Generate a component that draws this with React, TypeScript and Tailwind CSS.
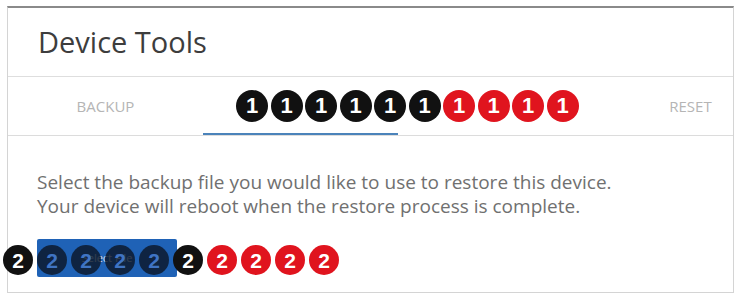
const font = { fontFamily: '"Open Sans", "Liberation Sans", sans-serif' };

function Marker({ n, red, size }: { n: number; red?: boolean; size: "lg" | "md" }) {
  const dims = size === "lg" ? "h-8 w-8 text-[22px]" : "h-[30px] w-[30px] text-[21px]";
  return (
    <div
      className={`${dims} flex items-center justify-center rounded-full font-extrabold leading-none text-white ${
        red ? "bg-[#e0141e]" : "bg-[#111111]"
      }`}
      style={{ fontFamily: '"Liberation Sans", Arial, sans-serif' }}
    >
      {n}
    </div>
  );
}

function ShadedMarker() {
  return (
    <div
      className="flex h-[30px] w-[30px] items-center justify-center rounded-full bg-[#0b1526]/80 text-[21px] font-extrabold leading-none text-[#3f74c4]"
      style={{ fontFamily: '"Liberation Sans", Arial, sans-serif' }}
    >
      2
    </div>
  );
}

// middle tab labels sit under the markers and can't be read
const tabs = ["Backup", "", "", "Reset"];

export default function App() {
  return (
    <div className="relative h-[298px] w-[734px] overflow-hidden bg-white" style={font}>
      <div className="pl-[7px] pt-[6px]">
        <div className="h-[287px] w-[727px] overflow-hidden border border-t-2 border-[#d4d4d4] border-t-[#8a8a8a] bg-white">
          <div className="flex h-[69px] items-center border-b border-[#dedede] px-[30px]">
            <h1 className="text-[29px] text-[#3d3d3d]">Device Tools</h1>
          </div>
          <div className="flex h-[59px] border-b border-[#dcdcdc]">
            {tabs.map((t, i) => (
              <div
                key={i}
                className={`flex w-[195px] shrink-0 items-center justify-center text-[15px] uppercase text-[#b5b5b5] ${
                  i === 1 ? "border-b-2 border-[#4b83ba]" : ""
                }`}
              >
                {t}
              </div>
            ))}
          </div>
          <div className="px-[29px] pt-[34px]">
            <p className="text-[19px] leading-[24px] text-[#707070]">
              Select the backup file you would like to use to restore this device.
              <br />
              Your device will reboot when the restore process is complete.
            </p>
            <button className="mt-[21px] flex h-[38px] w-[140px] items-center justify-center rounded-[2px] bg-[#1f62b6] text-[11px] text-white/80">
              Select File
            </button>
          </div>
        </div>
      </div>

      <div className="absolute left-[236px] top-[90px] flex gap-[2.5px]">
        {Array.from({ length: 10 }).map((_, i) => (
          <Marker key={i} n={1} red={i >= 6} size="lg" />
        ))}
      </div>

      <div className="absolute left-[3px] top-[245px] flex gap-[4px]">
        <Marker n={2} size="md" />
        <ShadedMarker />
        <ShadedMarker />
        <ShadedMarker />
        <ShadedMarker />
        <Marker n={2} size="md" />
        {Array.from({ length: 4 }).map((_, i) => (
          <Marker key={i} n={2} red size="md" />
        ))}
      </div>
    </div>
  );
}
